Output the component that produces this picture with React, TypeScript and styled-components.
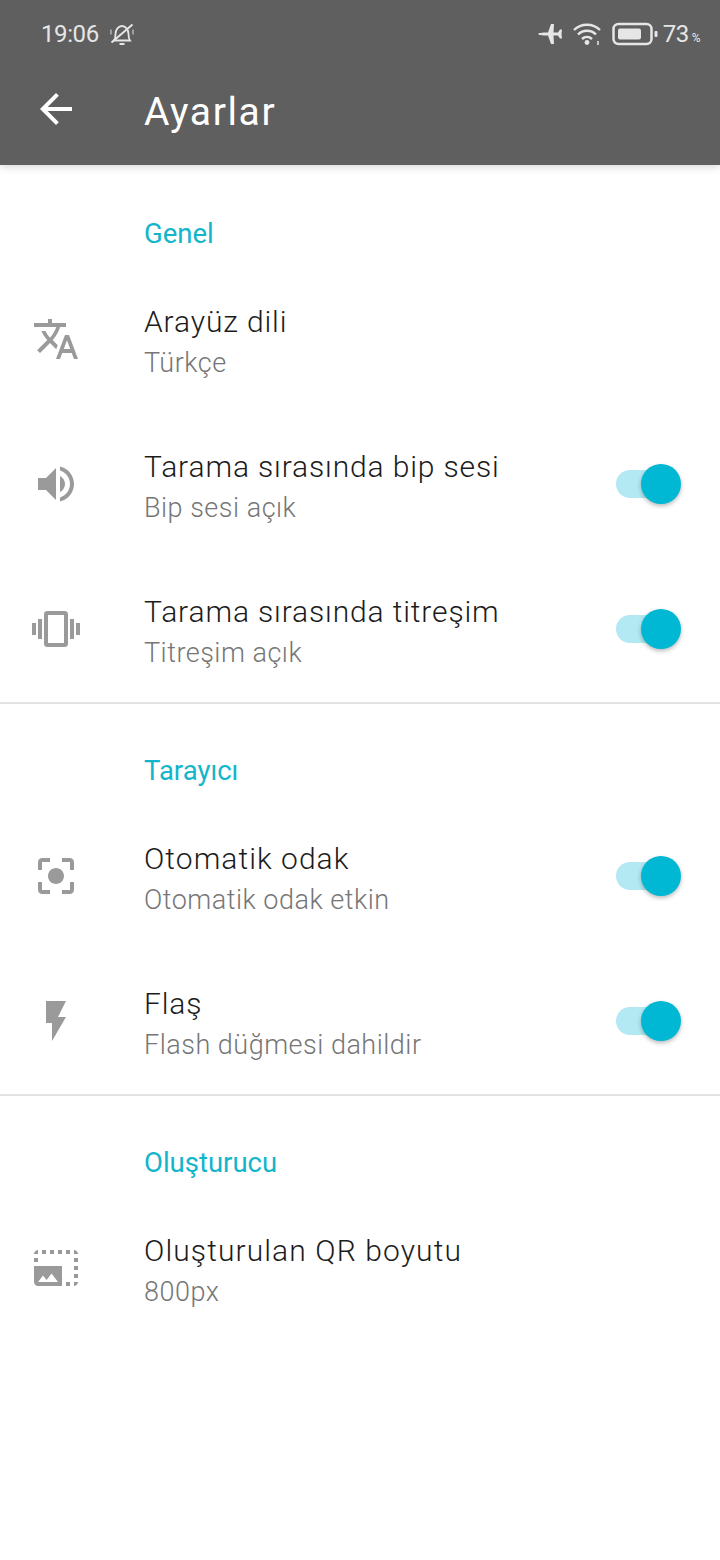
import React from "react";
import styled, { createGlobalStyle } from "styled-components";

const Global = createGlobalStyle`
  html, body { margin: 0; padding: 0; background: #ffffff; }
  body { font-family: Roboto, "Liberation Sans", sans-serif; }
`;

const Page = styled.div`
  width: 720px;
  height: 1560px;
  background: #ffffff;
  overflow: hidden;
`;

const AppBar = styled.header`
  height: 165px;
  background: #5f5f5f;
  box-shadow: 0 2px 8px rgba(0, 0, 0, 0.16);
  display: flex;
  flex-direction: column;
  position: relative;
  margin-bottom: 2px;
`;

const StatusBar = styled.div`
  height: 68px;
  padding: 0 20px 0 41px;
  display: flex;
  align-items: center;
  justify-content: space-between;
  color: #e6e6e6;
`;

const StatusGroup = styled.div`
  display: flex;
  align-items: center;
`;

const Clock = styled.span`
  font-size: 24px;
  letter-spacing: -0.4px;
  margin-right: 11px;
`;

const Battery = styled.span`
  font-size: 24px;
  letter-spacing: -0.5px;
  margin-left: 5px;
  display: flex;
  align-items: baseline;
`;

const Percent = styled.span`
  font-size: 12px;
  margin-left: 3px;
`;

const NavRow = styled.div`
  height: 82px;
  padding: 0 0 4px 32px;
  display: flex;
  align-items: center;
`;

const Title = styled.h1`
  margin: 5px 0 0 64px;
  font-size: 39px;
  font-weight: 400;
  letter-spacing: 1.6px;
  color: #ffffff;
`;

const Section = styled.section<{ $divider?: boolean }>`
  border-bottom: ${(p) => (p.$divider ? "2px solid #e2e2e2" : "none")};
`;

const SectionTitle = styled.h2`
  margin: 0;
  height: 102px;
  box-sizing: border-box;
  padding: 49px 0 0 144px;
  font-size: 27.5px;
  line-height: 36px;
  font-weight: 400;
  color: #12b5cb;
`;

const Row = styled.div`
  height: 145px;
  display: flex;
  align-items: center;
  padding: 0 39px 0 0;

  &:last-child {
    margin-bottom: -2px;
  }
`;

const IconCell = styled.div`
  width: 144px;
  padding: 0 0 6px 32px;
  box-sizing: border-box;
  flex: none;
  display: flex;
`;

const Texts = styled.div`
  flex: 1;
  display: flex;
  flex-direction: column;
  gap: 5px;
  padding-top: 2px;
`;

const Primary = styled.div<{ $tracking: number }>`
  font-size: 30px;
  font-weight: 300;
  line-height: 36px;
  letter-spacing: ${(p) => p.$tracking}px;
  color: #1c1c1c;
`;

const Secondary = styled.div`
  font-size: 27px;
  font-weight: 300;
  line-height: 36px;
  letter-spacing: 0.5px;
  color: #767676;
`;

const Track = styled.div`
  width: 56px;
  height: 28px;
  margin: -6px 9px 0 0;
  border-radius: 14px;
  background: #b3e9f2;
  position: relative;
`;

const Knob = styled.div`
  position: absolute;
  right: -9px;
  top: -6px;
  width: 40px;
  height: 40px;
  border-radius: 50%;
  background: #00b8d4;
  box-shadow: 0 2px 4px rgba(0, 0, 0, 0.28);
`;

const PlaneSlot = styled.span`
  display: flex;
  margin-right: 8px;
`;

const WifiSlot = styled.span`
  display: flex;
  margin-right: 10px;
`;

const icons = {
  translate:
    "M12.87 15.07l-2.54-2.51.03-.03c1.74-1.94 2.98-4.17 3.71-6.53H17V4h-7V2H8v2H1v1.99h11.17C11.5 7.92 10.44 9.75 9 11.35 8.07 10.32 7.3 9.19 6.69 8h-2c.73 1.63 1.73 3.17 2.98 4.56l-5.09 5.02L4 19l5-5 3.11 3.11.76-2.04zM18.5 10h-2L12 22h2l1.12-3h4.75L21 22h2l-4.5-12zm-2.62 7l1.62-4.33L19.12 17h-3.24z",
  volume:
    "M3 9v6h4l5 5V4L7 9H3zm13.5 3c0-1.77-1.02-3.29-2.5-4.03v8.05c1.48-.73 2.5-2.25 2.5-4.02zM14 3.23v2.06c2.89.86 5 3.54 5 6.71s-2.11 5.85-5 6.71v2.06c4.01-.91 7-4.49 7-8.77s-2.99-7.86-7-8.77z",
  vibration:
    "M0 15h2V9H0v6zm3 2h2V7H3v10zm19-8v6h2V9h-2zm-3 8h2V7h-2v10zM16.5 3h-9C6.67 3 6 3.67 6 4.5v15c0 .83.67 1.5 1.5 1.5h9c.83 0 1.5-.67 1.5-1.5v-15c0-.83-.67-1.5-1.5-1.5zM16 19H8V5h8v14z",
  focus:
    "M12 8c-2.21 0-4 1.79-4 4s1.79 4 4 4 4-1.79 4-4-1.79-4-4-4zm-7 7H3v4c0 1.1.9 2 2 2h4v-2H5v-4zM5 5h4V3H5c-1.1 0-2 .9-2 2v4h2V5zm14-2h-4v2h4v4h2V5c0-1.1-.9-2-2-2zm0 16h-4v2h4c1.1 0 2-.9 2-2v-4h-2v4z",
  flash: "M7 2v11h3v9l7-12h-4l4-8z",
  photo:
    "M21 15h2v2h-2v-2zm0-4h2v2h-2v-2zm2 8h-2v2c1 0 2-1 2-2zM13 3h2v2h-2V3zm8 4h2v2h-2V7zm0-4v2h2c0-1-1-2-2-2zM1 7h2v2H1V7zm16-4h2v2h-2V3zm0 16h2v2h-2v-2zM3 3C2 3 1 4 1 5h2V3zm6 0h2v2H9V3zM5 3h2v2H5V3zm-4 8v8c0 1.1.9 2 2 2h12V11H1zm2 8l2.5-3.21 1.79 2.15 2.5-3.22L13 19H3z",
};

type IconName = keyof typeof icons;

const Icon = ({ name }: { name: IconName }) => (
  <svg width="48" height="48" viewBox="0 0 24 24" fill="#9a9a9a">
    <path d={icons[name]} />
  </svg>
);

const Toggle = () => (
  <Track>
    <Knob />
  </Track>
);

const Item = ({
  icon,
  title,
  sub,
  toggle,
  tracking = 0.87,
}: {
  icon: IconName;
  title: string;
  sub: string;
  toggle?: boolean;
  tracking?: number;
}) => (
  <Row>
    <IconCell>
      <Icon name={icon} />
    </IconCell>
    <Texts>
      <Primary $tracking={tracking}>{title}</Primary>
      <Secondary>{sub}</Secondary>
    </Texts>
    {toggle && <Toggle />}
  </Row>
);

const SilentBell = () => (
  <svg width="24" height="24" viewBox="0 0 24 24" fill="none" stroke="#e6e6e6" strokeWidth="1.800">
    <path d="M4 18.500c1.300-1.700 1.500-3.500 1.500-6.500 0-4.500 3-8 6.500-8s6.500 3.500 6.500 8c0 3 .2 4.800 1.500 6.500z" />
    <path d="M9.500 22h5" strokeWidth="2" />
    <path d="M1.500 20.500L22.500 2.500" strokeWidth="2" />
    <path d="M1 7.500v5M23 7.500v5" strokeWidth="1.500" stroke="#b5b5b5" />
  </svg>
);

const Plane = () => (
  <svg width="26" height="20" viewBox="0 0 26 20" fill="#e6e6e6">
    <path d="M0 10c1-1 3-1.500 10-1.500L13 0h3l-.5 8.500H20L22 5.500h2L23.500 10l.5 4.500h-2L20 11.500h-4.500L16 20h-3l-3-8.500C3 11.500 1 11 0 10z" />
  </svg>
);

const Wifi = () => (
  <svg width="30" height="26" viewBox="0 0 30 26" fill="none" stroke="#e6e6e6" strokeWidth="2.400">
    <path d="M2 9c7-7 19-7 26 0M6 13.500c5-5 13-5 18 0M10 18c3-2.800 7-2.800 10 0" />
    <circle cx="15" cy="21.500" r="2.400" fill="#e6e6e6" stroke="none" />
    <path d="M26 24v-4" strokeWidth="1.500" />
  </svg>
);

const BatteryIcon = () => (
  <svg width="46" height="24" viewBox="0 0 46 24" fill="none">
    <rect x="1.500" y="2" width="38" height="20" rx="5" stroke="#e6e6e6" strokeWidth="2.500" />
    <rect x="6" y="6.500" width="23" height="11" rx="2" fill="#e6e6e6" />
    <rect x="42.500" y="9" width="3" height="6" rx="1" fill="#e6e6e6" />
  </svg>
);

export default function App() {
  return (
    <Page>
      <Global />
      <AppBar>
        <StatusBar>
          <StatusGroup>
            <Clock>19:06</Clock>
            <SilentBell />
          </StatusGroup>
          <StatusGroup>
            <PlaneSlot>
              <Plane />
            </PlaneSlot>
            <WifiSlot>
              <Wifi />
            </WifiSlot>
            <BatteryIcon />
            <Battery>
              73<Percent>%</Percent>
            </Battery>
          </StatusGroup>
        </StatusBar>
        <NavRow>
          <svg width="48" height="48" viewBox="0 0 24 24" fill="#ffffff">
            <path d="M20 11H7.830l5.590-5.590L12 4l-8 8 8 8 1.410-1.410L7.830 13H20v-2z" />
          </svg>
          <Title>Ayarlar</Title>
        </NavRow>
      </AppBar>

      <Section $divider>
        <SectionTitle>Genel</SectionTitle>
        <Item icon="translate" title="Arayüz dili" sub="Türkçe" />
        <Item icon="volume" title="Tarama sırasında bip sesi" sub="Bip sesi açık" toggle />
        <Item icon="vibration" title="Tarama sırasında titreşim" sub="Titreşim açık" toggle />
      </Section>
      <Section $divider>
        <SectionTitle>Tarayıcı</SectionTitle>
        <Item icon="focus" title="Otomatik odak" sub="Otomatik odak etkin" toggle tracking={1.05} />
        <Item icon="flash" title="Flaş" sub="Flash düğmesi dahildir" toggle />
      </Section>
      <Section>
        <SectionTitle>Oluşturucu</SectionTitle>
        <Item icon="photo" title="Oluşturulan QR boyutu" sub="800px" tracking={1.1} />
      </Section>
    </Page>
  );
}
